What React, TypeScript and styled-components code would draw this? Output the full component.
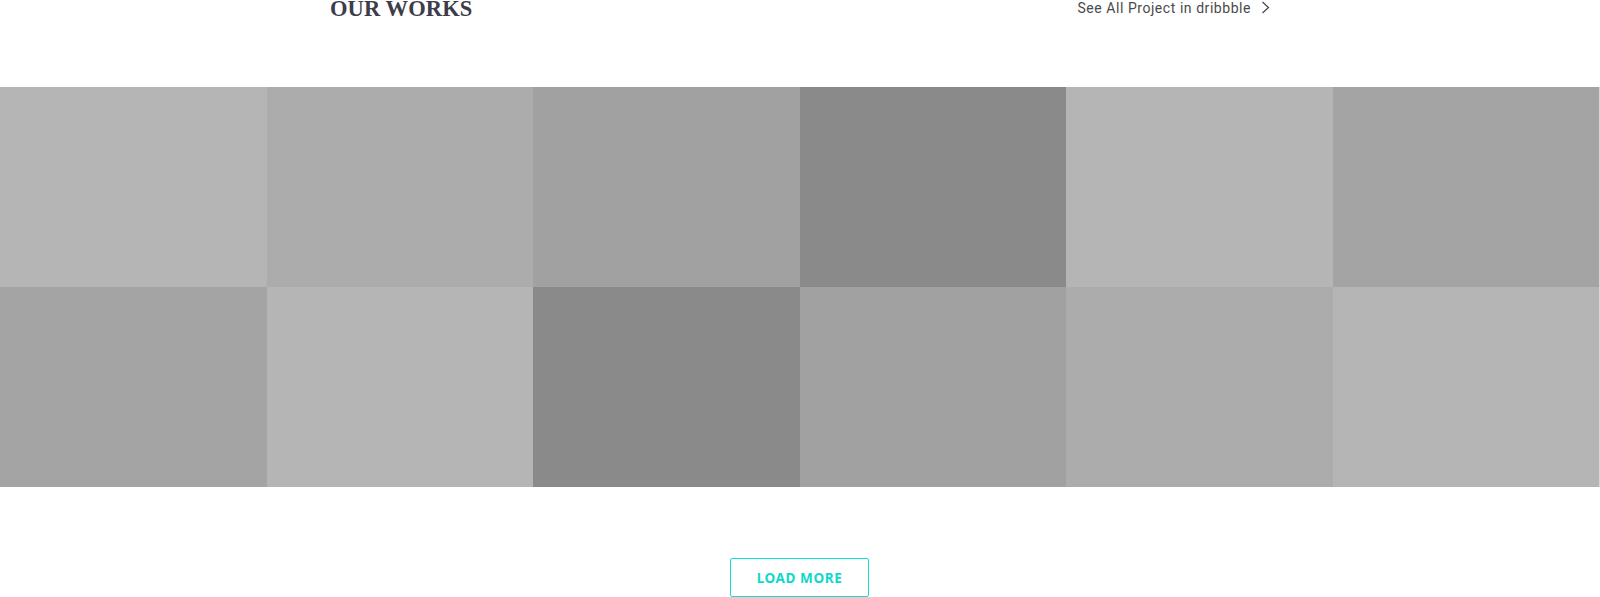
import styled, { createGlobalStyle } from "styled-components";

const GlobalStyle = createGlobalStyle`
    html, body {
        margin: 0;
        padding: 0;
        background: #fff;
        overflow: hidden;
    }
`;

const tiles = [
    "#b5b5b5", "#acacac", "#a1a1a1", "#8a8a8a", "#b5b5b5", "#a4a4a4",
    "#a4a4a4", "#b5b5b5", "#8a8a8a", "#a1a1a1", "#acacac", "#b5b5b5",
];

export default function App() {
    return (
        <>
            <GlobalStyle />
            <Section>
                <Header>
                    <Title>OUR WORKS</Title>
                    <SeeAll href="#">
                        See All Project in dribbble
                        <svg width="9" height="13" viewBox="0 0 9 13" fill="none">
                            <path d="M1.5 1 L7.5 6.5 L1.5 12" stroke="#444" strokeWidth="1.2" />
                        </svg>
                    </SeeAll>
                </Header>
                <Grid>
                    {tiles.map((c, i) => (
                        <Tile key={i} $bg={c} />
                    ))}
                </Grid>
                <Footer>
                    <LoadMore>LOAD MORE</LoadMore>
                </Footer>
            </Section>
        </>
    );
}

const Section = styled.section`
    width: 1600px;
    display: flex;
    flex-direction: column;
`;

const Header = styled.div`
    width: 940px;
    margin: 0 auto;
    height: 87px;
    display: flex;
    justify-content: space-between;
    align-items: flex-start;
`;

const Title = styled.h2`
    margin: -3px 0 0 0;
    font-family: "Liberation Serif", "DejaVu Serif", serif;
    font-weight: 700;
    font-size: 22.5px;
    line-height: 23px;
    letter-spacing: 0.1px;
    color: #3d3c4b;
`;

const SeeAll = styled.a`
    display: flex;
    align-items: center;
    gap: 10px;
    font-family: Roboto, "Liberation Sans", sans-serif;
    font-weight: 400;
    font-size: 14px;
    line-height: 16px;
    letter-spacing: 0.55px;
    color: #4a4a4a;
    text-decoration: none;

    svg {
        margin-top: -1px;
    }
`;

const Grid = styled.div`
    display: grid;
    grid-template-columns: repeat(6, 1fr);
    grid-auto-rows: 200px;
    width: 1599px;
    border-right: 1px solid #d6d6d6;
`;

const Tile = styled.div<{ $bg: string }>`
    background-color: ${(p) => p.$bg};
`;

const Footer = styled.div`
    display: flex;
    justify-content: center;
    padding-top: 71px;
`;

const LoadMore = styled.button`
    width: 139px;
    height: 39px;
    margin-left: -1px;
    background: #fff;
    border: 1px solid #14e0d2;
    border-radius: 2px;
    color: #0fd8cb;
    font-family: "Noto Sans", "Open Sans", sans-serif;
    font-weight: 700;
    font-size: 13.5px;
    letter-spacing: 0.6px;
    cursor: pointer;
`;
